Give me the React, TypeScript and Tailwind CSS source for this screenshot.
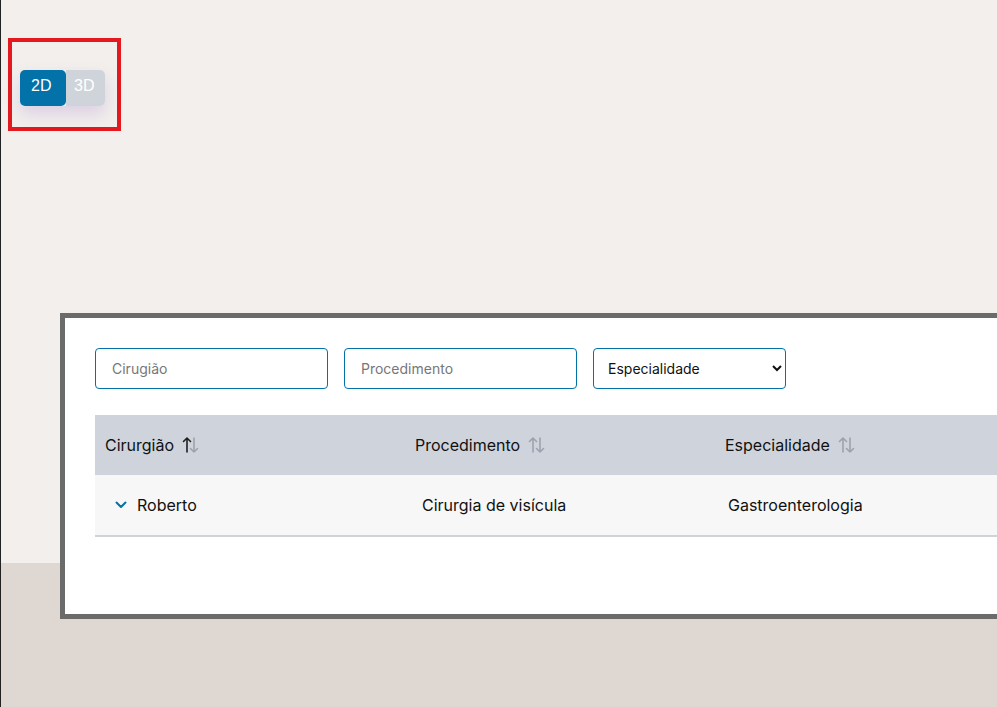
import React from 'react';

function SortIcon({ active }: { active?: boolean }) {
  const up = active ? '#1f1f1f' : '#9ca3af';
  return (
    <svg width="17" height="18" viewBox="0 0 17 18" fill="none" aria-hidden="true">
      <path d="M5 16V2M1.5 5.5L5 2l3.5 3.5" stroke={up} strokeWidth="1.6" strokeLinecap="round" strokeLinejoin="round" />
      <path d="M12 2v14M8.5 12.5L12 16l3.5-3.5" stroke="#9ca3af" strokeWidth="1.6" strokeLinecap="round" strokeLinejoin="round" />
    </svg>
  );
}

export default function App() {
  return (
    <div className="w-[997px] h-[707px] overflow-hidden border-l border-[#222] bg-[linear-gradient(to_bottom,#f2efec_563px,#dfd8d2_563px)] font-['Inter',sans-serif]">
      {/* view toggle */}
      <div className="ml-[7px] mt-[38px] w-[113px] h-[93px] border-4 border-[#e3191f] pt-[28px] pl-[8px]">
        <div className="flex w-fit rounded-[5px] shadow-[0_8px_16px_rgba(140,100,200,0.22)] font-['Liberation_Sans',sans-serif] text-[16px] text-white">
          <button className="w-[46px] h-[36px] rounded-[5px] bg-[#0272a8] text-left pl-[11px] pb-[5px]">2D</button>
          <button className="w-[39px] h-[36px] rounded-r-[5px] bg-[#cfd4db] text-left pl-[8px] pb-[5px]">3D</button>
        </div>
      </div>

      {/* filters + table */}
      <div className="ml-[59px] mt-[182px] w-[1000px] h-[306px] border-[5px] border-[#6b6b6b] bg-white pt-[30px] pl-[30px]">
        <div className="flex gap-4">
          <input
            placeholder="Cirugião"
            className="w-[233px] h-[41px] border border-[#0272a8] rounded-[4px] px-4 text-[14px] text-[#222] placeholder:text-[#777] outline-none"
          />
          <input
            placeholder="Procedimento"
            className="w-[233px] h-[41px] border border-[#0272a8] rounded-[4px] px-4 text-[14px] text-[#222] placeholder:text-[#777] outline-none"
          />
          <select className="w-[193px] h-[41px] border border-[#0272a8] rounded-[4px] pl-[10px] pr-[8px] text-[14px] text-[#111] bg-white outline-none">
            <option>Especialidade</option>
          </select>
        </div>

        <div className="mt-[26px] w-[960px] text-[16px] text-[#111]">
          <div className="flex h-[60px] items-center bg-[#cfd4dc]">
            <div className="w-[310px] pl-[10px] flex items-center gap-[8px]">
              Cirurgião <SortIcon active />
            </div>
            <div className="w-[310px] pl-[10px] flex items-center gap-[8px]">
              Procedimento <SortIcon />
            </div>
            <div className="w-[310px] pl-[10px] flex items-center gap-[8px]">
              Especialidade <SortIcon />
            </div>
          </div>
          <div className="flex h-[62px] items-center bg-[#f7f7f7] border-b-2 border-[#d0d4da]">
            <div className="w-[310px] pl-[20px] flex items-center gap-[10px]">
              <svg width="12" height="8" viewBox="0 0 12 8" fill="none" aria-hidden="true">
                <path d="M1.5 1.5L6 6l4.5-4.5" stroke="#0272a8" strokeWidth="2" strokeLinecap="round" strokeLinejoin="round" />
              </svg>
              Roberto
            </div>
            <div className="w-[310px] pl-[17px]">Cirurgia de visícula</div>
            <div className="w-[310px] pl-[13px]">Gastroenterologia</div>
          </div>
        </div>
      </div>
    </div>
  );
}
